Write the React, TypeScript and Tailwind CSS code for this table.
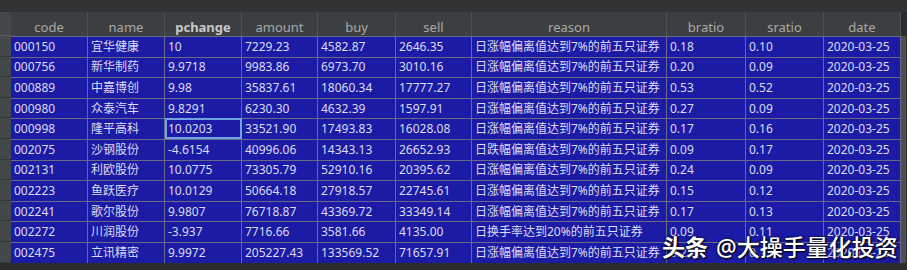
import React from 'react'

type Row = {
  code: string
  name: string
  pchange: string
  amount: string
  buy: string
  sell: string
  reason: string
  bratio: string
  sratio: string
  date: string
}

const UP = '日涨幅偏离值达到7%的前五只证券'

const rows: Row[] = [
  { code: '000150', name: '宜华健康', pchange: '10', amount: '7229.23', buy: '4582.87', sell: '2646.35', reason: UP, bratio: '0.18', sratio: '0.10', date: '2020-03-25' },
  { code: '000756', name: '新华制药', pchange: '9.9718', amount: '9983.86', buy: '6973.70', sell: '3010.16', reason: UP, bratio: '0.20', sratio: '0.09', date: '2020-03-25' },
  { code: '000889', name: '中嘉博创', pchange: '9.98', amount: '35837.61', buy: '18060.34', sell: '17777.27', reason: UP, bratio: '0.53', sratio: '0.52', date: '2020-03-25' },
  { code: '000980', name: '众泰汽车', pchange: '9.8291', amount: '6230.30', buy: '4632.39', sell: '1597.91', reason: UP, bratio: '0.27', sratio: '0.09', date: '2020-03-25' },
  { code: '000998', name: '隆平高科', pchange: '10.0203', amount: '33521.90', buy: '17493.83', sell: '16028.08', reason: UP, bratio: '0.17', sratio: '0.16', date: '2020-03-25' },
  { code: '002075', name: '沙钢股份', pchange: '-4.6154', amount: '40996.06', buy: '14343.13', sell: '26652.93', reason: '日跌幅偏离值达到7%的前五只证券', bratio: '0.09', sratio: '0.17', date: '2020-03-25' },
  { code: '002131', name: '利欧股份', pchange: '10.0775', amount: '73305.79', buy: '52910.16', sell: '20395.62', reason: UP, bratio: '0.24', sratio: '0.09', date: '2020-03-25' },
  { code: '002223', name: '鱼跃医疗', pchange: '10.0129', amount: '50664.18', buy: '27918.57', sell: '22745.61', reason: UP, bratio: '0.15', sratio: '0.12', date: '2020-03-25' },
  { code: '002241', name: '歌尔股份', pchange: '9.9807', amount: '76718.87', buy: '43369.72', sell: '33349.14', reason: UP, bratio: '0.17', sratio: '0.13', date: '2020-03-25' },
  { code: '002272', name: '川润股份', pchange: '-3.937', amount: '7716.66', buy: '3581.66', sell: '4135.00', reason: '日换手率达到20%的前五只证券', bratio: '0.09', sratio: '0.11', date: '2020-03-25' },
  { code: '002475', name: '立讯精密', pchange: '9.9972', amount: '205227.43', buy: '133569.52', sell: '71657.91', reason: UP, bratio: '0.25', sratio: '0.13', date: '2020-03-25' },
]

const columns: { key: keyof Row; label: string }[] = [
  { key: 'code', label: 'code' },
  { key: 'name', label: 'name' },
  { key: 'pchange', label: 'pchange' },
  { key: 'amount', label: 'amount' },
  { key: 'buy', label: 'buy' },
  { key: 'sell', label: 'sell' },
  { key: 'reason', label: 'reason' },
  { key: 'bratio', label: 'bratio' },
  { key: 'sratio', label: 'sratio' },
  { key: 'date', label: 'date' },
]

// fixed column widths measured from the screenshot
const grid = 'grid grid-cols-[77px_77px_77px_76px_78px_76px_195px_79px_78px_77px]'

export default function App() {
  return (
    <div
      className="relative w-[907px] h-[270px] overflow-hidden bg-[#2b2d2f] text-[12px]"
      style={{ fontFamily: '"Noto Sans", "Noto Sans CJK SC", sans-serif' }}
    >
      {/* top strip */}
      <div className="h-[12px] bg-[#313335]" />

      <div className="flex">
        {/* row header gutter */}
        <div className="w-[11px] flex flex-col bg-[#45484a]">
          <div className="h-[24px] border-b border-[#5a5d5f]" />
          {rows.map((r) => (
            <div key={r.code} className="h-[20.6px] border-b border-[#35373a]" />
          ))}
        </div>

        <div className="flex flex-col">
          {/* header */}
          <div className={`${grid} h-[24px] bg-[#3c3f41]`}>
            {columns.map((c) => (
              <div
                key={c.key}
                className={`flex items-end justify-center pb-[1px] leading-[16px] border-r border-[#4f5254] text-[13px] ${
                  c.key === 'pchange' ? 'font-bold text-[#c8c8c8]' : 'text-[#a9a9a9]'
                }`}
              >
                {c.label}
              </div>
            ))}
          </div>

          {/* body */}
          {rows.map((r) => (
            <div key={r.code} className={`${grid} h-[20.6px]`}>
              {columns.map((c) => {
                const selected = r.code === '000998' && c.key === 'pchange'
                return (
                  <div
                    key={c.key}
                    className={`flex items-center pl-[3px] whitespace-nowrap overflow-hidden bg-[#1b1ba6] text-[#dcdcf0] border-t border-r border-[#6a6a88] ${
                      selected ? 'outline-2 -outline-offset-2 outline-[#6fa3e6]' : ''
                    }`}
                  >
                    {r[c.key]}
                  </div>
                )
              })}
            </div>
          ))}
        </div>

        {/* scrollbar */}
        <div className="w-[5px] mt-[24px] h-[227px] bg-[#4d5052]" />
      </div>

      {/* watermark */}
      <div className="absolute left-[662px] top-[236px] flex items-center gap-[8px] text-white text-[23px] leading-none [text-shadow:1px_1px_2px_#000,0_0_3px_#000]">
        <span className="font-bold">头条</span>
        <span className="font-medium">@大操手量化投资</span>
      </div>
    </div>
  )
}
